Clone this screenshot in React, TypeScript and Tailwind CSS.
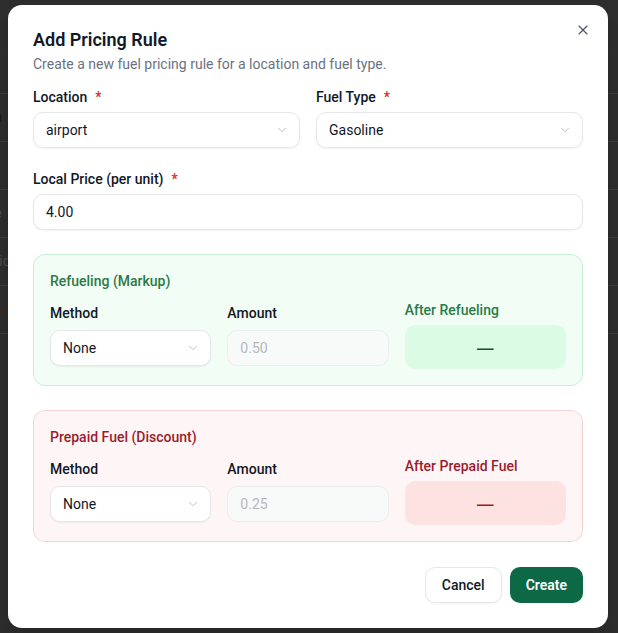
import { ChevronDown, X } from 'lucide-react';

const font = { fontFamily: 'Roboto, "Noto Sans", Arial, sans-serif' };

function Label({ children, required }: { children: React.ReactNode; required?: boolean }) {
  return (
    <div className="h-5 text-[14px] leading-5 font-medium text-[#111827]">
      {children}
      {required && <span className="ml-2 text-[#dc2626]">*</span>}
    </div>
  );
}

function SelectBox({ value }: { value: string }) {
  return (
    <div className="flex h-9 items-center justify-between rounded-[10px] border border-[#e5e7eb] bg-white pr-[10px] pl-3 text-[14px] text-[#111827] shadow-[0_1px_2px_rgba(0,0,0,0.06)]">
      <span>{value}</span>
      <ChevronDown className="h-3.5 w-3.5 text-[#b0b4bb]" strokeWidth={1.5} />
    </div>
  );
}

function Section({
  tone,
  title,
  after,
  amount,
}: {
  tone: 'green' | 'red';
  title: string;
  after: string;
  amount: string;
}) {
  const green = tone === 'green';
  return (
    <div
      className={
        green
          ? 'rounded-xl border border-[#c6efd3] bg-[#f2fdf5] px-4 pt-4 pb-4'
          : 'rounded-xl border border-[#f6d3d3] bg-[#fef6f6] px-4 pt-4 pb-4'
      }
    >
      <div
        className={
          green
            ? 'h-5 text-[14px] leading-5 font-medium text-[#2a7a47]'
            : 'h-5 text-[14px] leading-5 font-medium text-[#9b1c2c]'
        }
      >
        {title}
      </div>
      <div className="mt-[9px] grid grid-cols-3 items-center gap-4">
        <div>
          <Label>Method</Label>
          <div className="mt-[7px]">
            <SelectBox value="None" />
          </div>
        </div>
        <div>
          <Label>Amount</Label>
          <div className="mt-[7px] flex h-9 items-center rounded-[10px] border border-[#eceef1] bg-[#f8f9f9] px-3 text-[14px] text-[#b4b8be]">
            {amount}
          </div>
        </div>
        <div>
          <div
            className={
              green
                ? 'h-5 text-[14px] leading-5 font-medium text-[#2a7a47]'
                : 'h-5 text-[14px] leading-5 font-medium text-[#9b1c2c]'
            }
          >
            {after}
          </div>
          <div
            className={
              green
                ? 'mt-[5px] flex h-11 items-center justify-center rounded-[10px] bg-[#dbfbe5] text-[18px] font-medium text-[#14532d]'
                : 'mt-[5px] flex h-11 items-center justify-center rounded-[10px] bg-[#fde2e2] text-[18px] font-medium text-[#991b1b]'
            }
            style={{ fontFamily: '"Noto Sans", sans-serif' }}
          >
            —
          </div>
        </div>
      </div>
    </div>
  );
}

const bgRows = [
  { t: 'n', c: 'text-[#1a1a1a]' },
  { t: 'L', c: 'text-[#3a2a1e]' },
  { t: 'e', c: 'text-[#4a4a4a]' },
  { t: 'ric', c: 'text-[#4a4a4a]' },
  { t: 'sc', c: 'text-[#3a2a1e]' },
];

export default function App() {
  return (
    <div className="relative h-[633px] w-[618px] overflow-hidden bg-[#2d2d2d]" style={font}>
      {/* page behind the overlay */}
      <div className="pt-[93px]">
        {bgRows.map((r) => (
          <div key={r.t} className="flex h-[48px] items-center border-t border-[#3a3a3a]">
            <span className={`-ml-[6px] text-[15px] ${r.c}`}>{r.t}</span>
          </div>
        ))}
        <div className="border-t border-[#3a3a3a]" />
      </div>

      <div className="absolute top-[5px] left-[8px] w-[600px] rounded-[14px] bg-white px-[25px] pt-[23px] pb-[25px] shadow-xl">
        <button className="absolute top-[13px] right-[13px] flex h-6 w-6 items-center justify-center text-[#4b5563]">
          <X className="h-4 w-4" strokeWidth={1.75} />
        </button>

        <div className="h-6 text-[18px] leading-6 font-semibold text-[#111827]">Add Pricing Rule</div>
        <div className="mt-[2px] h-5 text-[14px] leading-5 text-[#6b7280]">
          Create a new fuel pricing rule for a location and fuel type.
        </div>

        <div className="mt-[13px] grid grid-cols-2 gap-4">
          <div>
            <Label required>Location</Label>
            <div className="mt-[5px]">
              <SelectBox value="airport" />
            </div>
          </div>
          <div>
            <Label required>Fuel Type</Label>
            <div className="mt-[5px]">
              <SelectBox value="Gasoline" />
            </div>
          </div>
        </div>

        <div className="mt-[21px]">
          <Label required>Local Price (per unit)</Label>
          <div className="mt-[5px] flex h-9 items-center rounded-[10px] border border-[#e5e7eb] bg-white px-3 text-[14px] text-[#111827] shadow-[0_1px_2px_rgba(0,0,0,0.06)]">
            4.00
          </div>
        </div>

        <div className="mt-6">
          <Section tone="green" title="Refueling (Markup)" after="After Refueling" amount="0.50" />
        </div>
        <div className="mt-6">
          <Section tone="red" title="Prepaid Fuel (Discount)" after="After Prepaid Fuel" amount="0.25" />
        </div>

        <div className="mt-[25px] flex justify-end gap-2">
          <button className="h-9 rounded-[10px] border border-[#e5e7eb] bg-white px-4 text-[14px] font-medium text-[#111827] shadow-[0_1px_2px_rgba(0,0,0,0.05)]">
            Cancel
          </button>
          <button className="h-9 rounded-[10px] bg-[#0d6845] px-4 text-[14px] font-semibold text-white">
            Create
          </button>
        </div>
      </div>
    </div>
  );
}
